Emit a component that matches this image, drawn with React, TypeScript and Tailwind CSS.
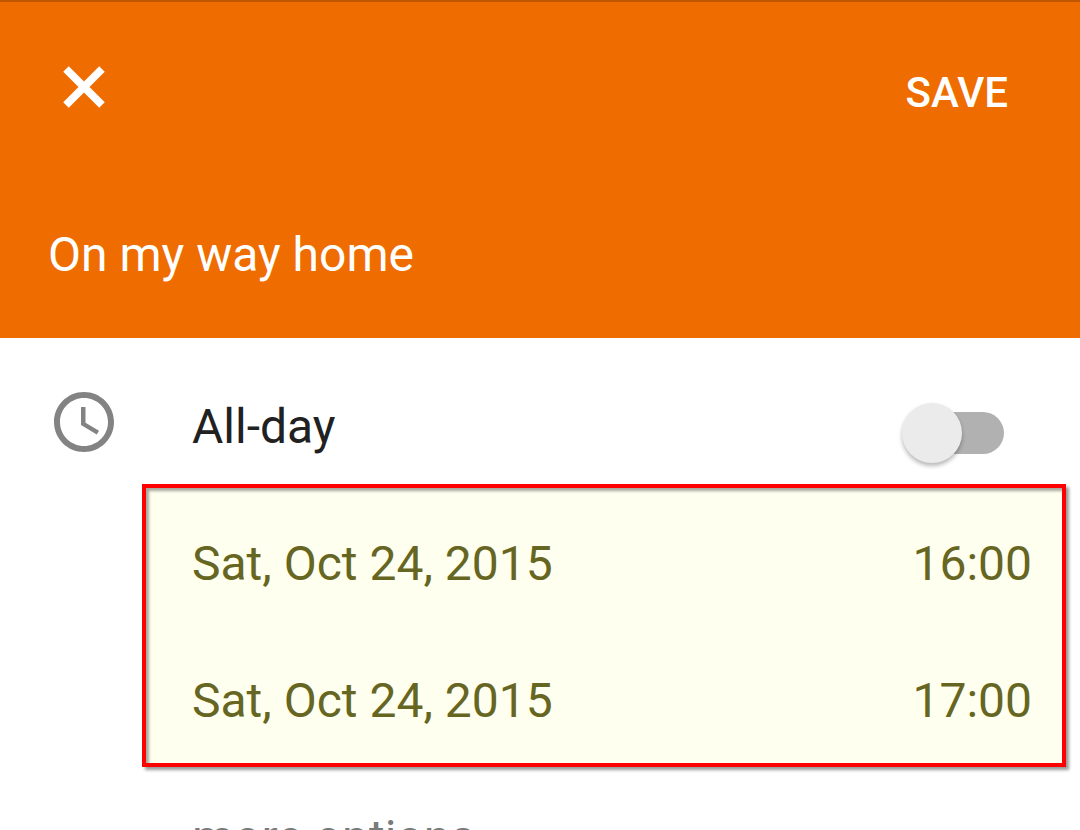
import { useState } from "react";

const times = [
  { id: "start", name: "Start", date: "Sat, Oct 24, 2015", time: "16:00" },
  { id: "end", name: "End", date: "Sat, Oct 24, 2015", time: "17:00" },
];

function CloseIcon() {
  return (
    <svg viewBox="0 0 72 72" className="size-[72px] fill-none stroke-white" aria-hidden="true">
      <path strokeWidth="7.8" d="M18 18 54 54M54 18 18 54" />
    </svg>
  );
}

function ClockIcon() {
  return (
    <svg viewBox="0 0 24 24" className="size-[72px] shrink-0 fill-[#838383]" aria-hidden="true">
      <path d="M11.99 2C6.47 2 2 6.48 2 12s4.47 10 9.99 10C17.52 22 22 17.52 22 12S17.52 2 11.99 2zM12 20c-4.42 0-8-3.58-8-8s3.58-8 8-8 8 3.58 8 8-3.58 8-8 8z" />
      <path d="M12.5 7H11v6l5.25 3.15.75-1.23-4.5-2.67z" />
    </svg>
  );
}

export default function App() {
  const [title, setTitle] = useState("On my way home");
  const [allDay, setAllDay] = useState(false);

  return (
    <div className="h-screen overflow-hidden bg-white font-['Roboto',sans-serif] text-5xl leading-14 text-[#212121]">
      <header className="border-t-2 border-[#bf5600] bg-[#ef6c00] px-12 pt-[49px] pb-[55px] text-white">
        <div className="flex items-start justify-between">
          <button type="button" aria-label="Close">
            <CloseIcon />
          </button>
          <button type="button" className="px-6 pt-[18px] text-[42px] leading-12 font-medium">
            SAVE
          </button>
        </div>
        <input
          type="text"
          aria-label="Event title"
          value={title}
          onChange={(e) => setTitle(e.target.value)}
          className="mt-[104px] block h-14 w-full bg-transparent outline-none"
        />
      </header>

      <main>
        <div className="flex items-start pt-12 pr-[76px] pb-[26px] pl-12">
          <ClockIcon />
          <label htmlFor="all-day" className="ml-[72px] flex-1 pt-[13px]">
            All-day
          </label>
          <span className="relative mt-[26px] flex h-[42px] w-[102px]">
            <input
              id="all-day"
              type="checkbox"
              role="switch"
              checked={allDay}
              onChange={(e) => setAllDay(e.target.checked)}
              className="peer ml-2 h-full flex-1 appearance-none rounded-full bg-[#b1b1b1] checked:bg-[#f7b580]"
            />
            <span className="pointer-events-none absolute -top-[9px] left-0 size-[60px] rounded-full bg-[#ebebeb] shadow-[0_3px_4px_rgba(0,0,0,0.28)] peer-checked:right-0 peer-checked:left-auto peer-checked:bg-[#ef6c00]" />
          </span>
        </div>

        <section
          aria-label="Event time"
          className="mr-[14px] ml-[142px] flex flex-col gap-[81px] border-4 border-[#ff0000] bg-[#fffff0] pt-12 pr-[30px] pb-[34px] pl-[46px] text-[#666622] shadow-[3px_3px_3px_rgba(0,0,0,0.4),inset_3px_3px_3px_rgba(0,0,0,0.35)]"
        >
          {times.map((row) => (
            <div key={row.id} className="flex justify-between">
              <button type="button" aria-label={`${row.name} date ${row.date}`}>
                {row.date}
              </button>
              <button type="button" aria-label={`${row.name} time ${row.time}`}>
                {row.time}
              </button>
            </div>
          ))}
        </section>

        <button type="button" className="mt-[43px] ml-48 block text-[#7a7a7a]">
          more options
        </button>
      </main>
    </div>
  );
}
